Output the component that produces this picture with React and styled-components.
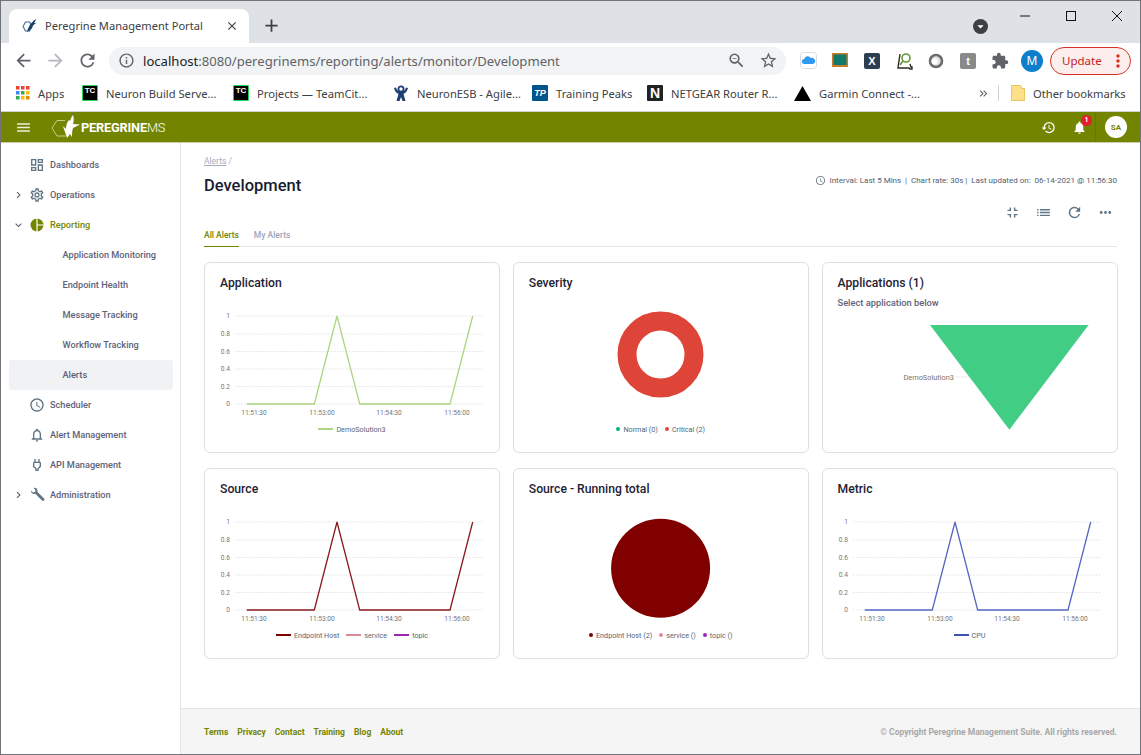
import React from "react";
import styled, { createGlobalStyle } from "styled-components";
import {
  MdArrowBack,
  MdArrowForward,
  MdRefresh,
  MdInfoOutline,
  MdZoomOut,
  MdStarBorder,
  MdExtension,
  MdMoreVert,
  MdClose,
  MdAdd,
  MdMenu,
  MdHistory,
  MdNotifications,
  MdNotificationsNone,
  MdChevronRight,
  MdExpandMore,
  MdOutlineDashboard,
  MdOutlineSettings,
  MdAccessTime,
  MdOutlinePower,
  MdFullscreenExit,
  MdList,
  MdMoreHoriz,
  MdArrowDropDown,
  MdKeyboardDoubleArrowRight,
} from "react-icons/md";

const OLIVE = "#738500";
const APP_FONT = `Roboto, "Liberation Sans", sans-serif`;
const CHROME_FONT = `"Noto Sans", "Open Sans", sans-serif`;

const GlobalStyle = createGlobalStyle`
  html, body {
    margin: 0;
    padding: 0;
    background: #fff;
  }
  * {
    box-sizing: border-box;
  }
`;

const Shell = styled.div`
  width: 1141px;
  height: 755px;
  display: flex;
  flex-direction: column;
  overflow: hidden;
  border: 1px solid #707478;
  font-family: ${APP_FONT};
`;

// Browser chrome
const TabStrip = styled.div`
  height: 42px;
  flex: none;
  background: #dee1e6;
  display: flex;
  align-items: flex-end;
  padding-left: 8px;
  position: relative;
`;

const Tab = styled.div`
  width: 240px;
  height: 34px;
  background: #fff;
  border-radius: 8px 8px 0 0;
  display: flex;
  align-items: center;
  padding: 0 10px 1px 13px;
  font-family: ${CHROME_FONT};
  font-size: 11.1px;
  color: #3c4043;
`;

const TabTitle = styled.span`
  flex: 1;
  margin-left: 8px;
  white-space: nowrap;
`;

const NewTab = styled.div`
  display: flex;
  align-items: center;
  margin: 0 0 1px 12px;
  height: 34px;
  color: #3c4043;
  font-size: 21px;
`;

const TabSearch = styled.div`
  position: absolute;
  left: 972px;
  top: 18px;
  width: 15px;
  height: 15px;
  border-radius: 50%;
  background: #3c4043;
  color: #fff;
  display: flex;
  align-items: center;
  justify-content: center;
  font-size: 15px;
`;

const WindowControls = styled.div`
  position: absolute;
  right: 0;
  top: 0;
  display: flex;
  height: 30px;
  align-items: center;
  padding-right: 15px;
  gap: 30px;
`;

const Toolbar = styled.div`
  height: 35px;
  flex: none;
  background: #fff;
  display: flex;
  align-items: center;
  padding-left: 6px;
`;

const NavIcon = styled.div`
  width: 32px;
  height: 28px;
  display: flex;
  align-items: center;
  justify-content: center;
  font-size: 21px;
  color: ${(p) => (p.$off ? "#b4b7bb" : "#5f6368")};
`;

const Omnibox = styled.div`
  width: 677px;
  height: 28px;
  margin-left: 6px;
  border-radius: 14px;
  background: #f1f3f4;
  display: flex;
  align-items: center;
  padding: 0 2px 0 9px;
  color: #5f6368;
  font-size: 17px;
`;

const Url = styled.div`
  flex: 1;
  margin-left: 8px;
  font-family: ${CHROME_FONT};
  font-size: 13.1px;
  color: #5f6368;
  white-space: nowrap;
`;

const UrlHost = styled.span`
  color: #202124;
`;

const OmniAction = styled.div`
  width: 32px;
  display: flex;
  justify-content: center;
  font-size: 19px;
`;

const Extensions = styled.div`
  display: flex;
  align-items: center;
  margin-left: 6px;
`;

const Ext = styled.div`
  width: 32px;
  height: 28px;
  display: flex;
  align-items: center;
  justify-content: center;
`;

const ExtBadge = styled.div`
  width: 16px;
  height: 16px;
  border-radius: 2px;
  background: ${(p) => p.$bg};
  color: #fff;
  display: flex;
  align-items: center;
  justify-content: center;
  font-family: "Liberation Sans", sans-serif;
  font-size: 11px;
  font-weight: 700;
`;

const Profile = styled.div`
  width: 22px;
  height: 22px;
  border-radius: 50%;
  background: #0b7fcc;
  color: #fff;
  display: flex;
  align-items: center;
  justify-content: center;
  font-family: ${CHROME_FONT};
  font-size: 12px;
  margin-left: 5px;
`;

const UpdatePill = styled.div`
  width: 81px;
  height: 28px;
  margin-left: 7px;
  border: 1px solid #d93025;
  border-radius: 14px;
  background: #fbeeec;
  color: #c5221f;
  display: flex;
  align-items: center;
  padding-left: 11px;
  font-family: ${CHROME_FONT};
  font-size: 11.5px;
`;

const UpdateDots = styled.span`
  margin-left: 6px;
  display: flex;
  font-size: 20px;
  color: #d93025;
`;

const BookmarkBar = styled.div`
  height: 34px;
  flex: none;
  background: #fff;
  display: flex;
  align-items: center;
  padding: 0 0 3px 15px;
  font-family: ${CHROME_FONT};
  font-size: 11.2px;
  color: #3c4043;
  border-bottom: 1px solid #d2d3d5;
`;

const Bookmark = styled.div`
  width: ${(p) => p.$w}px;
  display: flex;
  align-items: center;
  gap: 8px;
  white-space: nowrap;
  flex: none;

  & > svg {
    flex: none;
  }
`;

const TileIcon = styled.div`
  width: 16px;
  height: 16px;
  flex: none;
  background: ${(p) => p.$bg};
  color: #fff;
  border: ${(p) => (p.$ring ? `1px solid ${p.$ring}` : "none")};
  font-family: "Liberation Sans", sans-serif;
  font-size: ${(p) => p.$fs || 8}px;
  font-weight: 700;
  font-style: ${(p) => (p.$italic ? "italic" : "normal")};
  line-height: ${(p) => p.$lh || 10}px;
  display: flex;
  justify-content: center;
  border-radius: 1px;
`;

const BarDivider = styled.div`
  width: 1px;
  height: 16px;
  background: #d0d2d5;
  margin: 0 12px 0 8px;
`;

// App header
const AppHeader = styled.header`
  height: 31px;
  flex: none;
  background: ${OLIVE};
  border-bottom: 1px solid #c9cdb0;
  display: flex;
  align-items: center;
  padding-left: 14px;
  color: #fff;
`;

const Burger = styled.div`
  display: flex;
  font-size: 17px;
  color: #eef1dc;
  margin-right: 18px;
`;

const LogoText = styled.div`
  font-family: ${APP_FONT};
  font-size: 12.8px;
  font-weight: 700;
  letter-spacing: -0.2px;
`;

const LogoLight = styled.span`
  font-weight: 300;
`;

const HeaderRight = styled.div`
  margin-left: auto;
  display: flex;
  align-items: center;
  height: 100%;
`;

const HeaderIcon = styled.div`
  position: relative;
  display: flex;
  font-size: 15px;
  margin-right: ${(p) => p.$mr}px;
`;

const Counter = styled.span`
  position: absolute;
  top: -5px;
  right: -5px;
  width: 11px;
  height: 11px;
  border-radius: 50%;
  background: #e3202a;
  color: #fff;
  font-size: 7px;
  font-weight: 700;
  line-height: 11px;
  text-align: center;
`;

const HeaderUser = styled.div`
  height: 100%;
  border-left: 1px solid #66760a;
  padding: 0 13px 0 9px;
  display: flex;
  align-items: center;
`;

const UserCircle = styled.div`
  width: 22px;
  height: 22px;
  border-radius: 50%;
  background: #fff;
  color: ${OLIVE};
  font-size: 8px;
  font-weight: 700;
  display: flex;
  align-items: center;
  justify-content: center;
`;

// Body
const Body = styled.div`
  flex: 1;
  min-height: 0;
  display: flex;
`;

const Sidebar = styled.nav`
  width: 180px;
  flex: none;
  border-right: 1px solid #e4e5e7;
  padding-top: 6.5px;
`;

const NavItem = styled.div`
  height: 30px;
  width: 164px;
  margin-left: 8px;
  padding-left: ${(p) => (p.$sub ? 53.5 : 5)}px;
  display: flex;
  align-items: center;
  border-radius: 3px;
  background: ${(p) => (p.$active ? "#f1f2f4" : "transparent")};
  color: ${(p) => (p.$on ? OLIVE : "#5e6278")};
  font-size: 9.2px;
  font-weight: 500;
  white-space: nowrap;
`;

const Chevron = styled.span`
  width: 13px;
  display: flex;
  font-size: 16px;
  color: #595d6e;
  margin-left: -2px;
  margin-right: 1px;
`;

const NavIconBox = styled.span`
  width: 18px;
  margin: 0 4px 0 2px;
  display: flex;
  justify-content: center;
  font-size: 16px;
  color: #5f7484;
`;

const Main = styled.main`
  flex: 1;
  min-width: 0;
  display: flex;
  flex-direction: column;
`;

const Content = styled.div`
  flex: 1;
  padding: 13px 23px 0 23px;
`;

const Crumb = styled.div`
  font-size: 8.5px;
  line-height: 11px;
  color: #a7abc3;
`;

const CrumbLink = styled.span`
  text-decoration: underline;
`;

const TitleRow = styled.div`
  display: flex;
  align-items: center;
  justify-content: space-between;
  margin-top: 6px;
  height: 24px;
`;

const PageTitle = styled.h1`
  margin: 0;
  font-size: 16.5px;
  font-weight: 500;
  color: #181c32;
`;

const Status = styled.div`
  display: flex;
  align-items: center;
  font-size: 8px;
  font-weight: 400;
  color: #4f6070;
  white-space: pre;
  margin-top: -9px;
`;

const StatusClock = styled.span`
  display: flex;
  font-size: 11px;
  margin-right: 4px;
  color: #74808c;
`;

const Actions = styled.div`
  display: flex;
  justify-content: flex-end;
  gap: 11px;
  height: 17px;
  margin-top: 6.5px;
  padding-right: 2px;
`;

const ActionIcon = styled.span`
  width: 20px;
  display: flex;
  justify-content: center;
  font-size: 17px;
  color: #5f7484;
`;

const Tabs = styled.div`
  display: flex;
  gap: 15px;
  margin-top: 2.5px;
  border-bottom: 1px solid #e4e5e7;
`;

const TabLink = styled.div`
  height: 24px;
  padding-top: 7px;
  font-size: 8.5px;
  font-weight: 500;
  color: ${(p) => (p.$on ? OLIVE : "#a1a5b7")};
  border-bottom: 1px solid ${(p) => (p.$on ? OLIVE : "transparent")};
  margin-bottom: -1px;
`;

const CardGrid = styled.div`
  display: grid;
  grid-template-columns: repeat(3, 1fr);
  grid-auto-rows: 190.5px;
  column-gap: 12.75px;
  row-gap: 15.5px;
  margin-top: 15px;
`;

const Card = styled.section`
  border: 1px solid #dedfe1;
  border-radius: 6px;
  padding-top: 13px;
  background: #fff;
`;

const CardTitle = styled.h3`
  margin: 0;
  padding-left: 15px;
  font-size: 12.2px;
  line-height: 15px;
  font-weight: 500;
  color: #1e2233;
`;

const CardSubtitle = styled.div`
  padding-left: 15px;
  margin-top: 5px;
  font-size: 9.3px;
  line-height: 14px;
  font-weight: 500;
  color: #5e6278;
`;

const ChartSvg = styled.svg`
  display: block;
`;

const AxisText = styled.text`
  font-family: ${APP_FONT};
  font-size: ${(p) => p.$size || 6.6}px;
  fill: #767676;
`;

const Legend = styled.div`
  height: 14px;
  margin-top: 1px;
  display: flex;
  align-items: center;
  justify-content: center;
  gap: 7px;
  font-size: 7.2px;
  color: #556677;
`;

const LegendItem = styled.span`
  display: flex;
  align-items: center;
  gap: 3px;
`;

const LegendLine = styled.i`
  width: 15px;
  height: 2px;
  background: ${(p) => p.$color};
`;

const LegendDot = styled.i`
  width: 4px;
  height: 4px;
  border-radius: 50%;
  background: ${(p) => p.$color};
`;

const Footer = styled.footer`
  height: 46px;
  flex: none;
  background: #f5f5f5;
  border-top: 1px solid #e4e5e7;
  display: flex;
  align-items: center;
  justify-content: space-between;
  padding: 0 23px;
  font-size: 8.5px;
  font-weight: 700;
`;

const FooterLinks = styled.div`
  display: flex;
  gap: 9px;
  color: ${OLIVE};
`;

const Copyright = styled.div`
  color: #a8a8a8;
`;

// Drawings
const Favicon = () => (
  <svg width="15" height="15" viewBox="0 0 15 15">
    <path d="M1 8.500l2.500-4.500h4l2.500 4.500-2.500 4.500h-4z" fill="none" stroke="#3d6e9c" strokeWidth="1.100" />
    <path d="M5 14c1-4 3-9 9-13-.5 2-1 3-2 4l2 0-3 2.500c-.5 2.500-3 5-6 6.500z" fill="#1c3f66" />
  </svg>
);

const PeregrineLogo = () => (
  <svg width="31" height="26" viewBox="0 0 31 26">
    <path d="M15 6.500H7L2 14l5 8h9" fill="none" stroke="#c3cd8d" strokeWidth="1" />
    <path
      d="M17 24c-1-4-3-8-4-12l3 3c0-4 1-7 3-9l1 1c1-3 2-5 3-6 1 3 1 6 0 9l7 .5-7 3.500c-1 3-1 6-1 9l-2-3z"
      fill="#fff"
    />
  </svg>
);

const ReportingIcon = () => (
  <svg width="14" height="14" viewBox="0 0 14 14">
    <circle cx="7" cy="7" r="6.500" fill={OLIVE} />
    <path d="M7 0v14M7 7h7" stroke="#fff" strokeWidth="1.200" />
  </svg>
);

const KeyIcon = () => (
  <svg width="15" height="15" viewBox="0 0 15 15">
    <path
      d="M1 3.500 3 5.500l2-.5.500-2L3.500 1c2-.8 4 .5 4 2.500 0 .5 0 1-.2 1.300l6.700 6.700c.6.600.6 1.400 0 2s-1.400.6-2 0L5.300 6.800c-2 .8-4.800-1-4.300-3.300z"
      fill="#5f7484"
    />
  </svg>
);

const AppsGrid = () => {
  const colors = ["#ea4335", "#ea4335", "#ea4335", "#4285f4", "#34a853", "#fbbc04", "#34a853", "#fbbc04", "#ea8600"];
  return (
    <svg width="14" height="14" viewBox="0 0 14 14">
      {colors.map((c, i) => (
        <rect key={i} x={(i % 3) * 5} y={Math.floor(i / 3) * 5} width="3.500" height="3.500" fill={c} />
      ))}
    </svg>
  );
};

const AtlassianIcon = () => (
  <svg width="16" height="17" viewBox="0 0 16 17">
    <circle cx="8" cy="4" r="2.600" fill="none" stroke="#1d3f72" strokeWidth="1.800" />
    <path d="M1 3c1 4 3 5 4.500 6L3.500 16h3L8 12l1.500 4h3l-2-7C12 8 14 7 15 3l-2-.5C12 6 10 7 8 7S4 6 3 2.500z" fill="#1d3f72" />
  </svg>
);

const GarminIcon = () => (
  <svg width="17" height="15" viewBox="0 0 17 15">
    <path d="M8.500 0 17 15H0z" fill="#000" />
  </svg>
);

const FolderIcon = () => (
  <svg width="14" height="16" viewBox="0 0 14 16">
    <path d="M.5.500h9l1 1v2h3v12H.500z" fill="#fce08a" stroke="#e8c660" />
  </svg>
);

const CloudExt = () => (
  <svg width="17" height="17" viewBox="0 0 17 17">
    <rect x=".5" y=".5" width="16" height="16" rx="3" fill="#fff" stroke="#dadce0" />
    <path d="M4.500 12a2.500 2.500 0 0 1-.3-5 3.500 3.500 0 0 1 6.500-1 3 3 0 0 1 2.300 6z" fill="#2f9bf0" />
  </svg>
);

const BoardExt = () => (
  <svg width="16" height="15" viewBox="0 0 16 15">
    <rect width="16" height="14" fill="#c77c2c" />
    <rect x="1.500" y="1.500" width="13" height="10.500" fill="#11786a" />
  </svg>
);

const SearchExt = () => (
  <svg width="17" height="18" viewBox="0 0 17 18">
    <path d="M4 2 2 16h11l1 1h2v-2h-1l-1-3" fill="none" stroke="#2b2b2b" strokeWidth="1.400" />
    <circle cx="10" cy="6" r="4" fill="#fff" stroke="#5f9a32" strokeWidth="1.600" />
    <path d="M7 9l-3 4" stroke="#5f9a32" strokeWidth="1.600" />
  </svg>
);

const RingExt = () => (
  <svg width="16" height="16" viewBox="0 0 16 16">
    <circle cx="8" cy="8" r="6" fill="#e4e4e4" stroke="#6b6b6b" strokeWidth="2.600" />
    <circle cx="6.500" cy="8.500" r="3" fill="#fff" />
  </svg>
);

const MinIcon = () => (
  <svg width="16" height="16" viewBox="0 0 16 16">
    <path d="M3 8h10" stroke="#111" strokeWidth="1" />
  </svg>
);

const MaxIcon = () => (
  <svg width="16" height="16" viewBox="0 0 16 16">
    <rect x="3.500" y="3.500" width="9" height="9" fill="none" stroke="#111" strokeWidth="1" />
  </svg>
);

const CloseIcon = () => (
  <svg width="16" height="16" viewBox="0 0 16 16">
    <path d="M3 3l10 10M13 3 3 13" stroke="#111" strokeWidth="1" />
  </svg>
);

const TICKS = [
  ["1", 25],
  ["0.8", 43],
  ["0.6", 60.5],
  ["0.4", 78],
  ["0.2", 95.5],
  ["0", 113],
];
const TIMES = [
  ["11:51:30", 49],
  ["11:53:00", 117],
  ["11:54:30", 184],
  ["11:56:00", 252],
];

const LineChart = ({ color }) => (
  <ChartSvg width="294" height="130" viewBox="0 0 294 130">
    {TICKS.map(([label, y]) => (
      <g key={label}>
        <line x1="30" x2="279" y1={y} y2={y} stroke="#dcdcdc" strokeWidth="0.8" strokeDasharray="1.500 1.500" />
        <AxisText x="25" y={y + 2.4} textAnchor="end">
          {label}
        </AxisText>
      </g>
    ))}
    {TIMES.map(([label, x]) => (
      <AxisText key={label} x={x} y="123.500" textAnchor="middle">
        {label}
      </AxisText>
    ))}
    <polyline
      points="41.700,113 109.300,113 132,25 154.700,113 245,113 267.700,25"
      fill="none"
      stroke={color}
      strokeWidth="1.300"
    />
  </ChartSvg>
);

const Donut = () => (
  <ChartSvg width="294" height="130" viewBox="0 0 294 130">
    <circle cx="146.500" cy="63.500" r="33.500" fill="none" stroke="#de4538" strokeWidth="19" />
  </ChartSvg>
);

const Pie = () => (
  <ChartSvg width="294" height="130" viewBox="0 0 294 130">
    <circle cx="146.600" cy="71.300" r="49.500" fill="#800000" />
  </ChartSvg>
);

const Funnel = () => (
  <ChartSvg width="294" height="125" viewBox="0 0 294 125">
    <path d="M107 15H265.600L186.400 119.700z" fill="#42cd85" />
    <line x1="133" x2="146" y1="67" y2="67" stroke="#cfcfcf" strokeWidth="0.8" strokeDasharray="1.500 1.500" />
    <AxisText $size={7.4} x="131" y="69.500" textAnchor="end">
      DemoSolution3
    </AxisText>
  </ChartSvg>
);

const NAV_SUB = ["Application Monitoring", "Endpoint Health", "Message Tracking", "Workflow Tracking"];

const App = () => {
  return (
    <>
      <GlobalStyle />
      <Shell>
        <TabStrip>
          <Tab>
            <Favicon />
            <TabTitle>Peregrine Management Portal</TabTitle>
            <MdClose size={14} color="#3c4043" />
          </Tab>
          <NewTab>
            <MdAdd />
          </NewTab>
          <TabSearch>
            <MdArrowDropDown />
          </TabSearch>
          <WindowControls>
            <MinIcon />
            <MaxIcon />
            <CloseIcon />
          </WindowControls>
        </TabStrip>

        <Toolbar>
          <NavIcon>
            <MdArrowBack />
          </NavIcon>
          <NavIcon $off>
            <MdArrowForward />
          </NavIcon>
          <NavIcon>
            <MdRefresh />
          </NavIcon>
          <Omnibox>
            <MdInfoOutline />
            <Url>
              <UrlHost>localhost</UrlHost>:8080/peregrinems/reporting/alerts/monitor/Development
            </Url>
            <OmniAction>
              <MdZoomOut />
            </OmniAction>
            <OmniAction>
              <MdStarBorder />
            </OmniAction>
          </Omnibox>
          <Extensions>
            <Ext>
              <CloudExt />
            </Ext>
            <Ext>
              <BoardExt />
            </Ext>
            <Ext>
              <ExtBadge $bg="#2c3e50">X</ExtBadge>
            </Ext>
            <Ext>
              <SearchExt />
            </Ext>
            <Ext>
              <RingExt />
            </Ext>
            <Ext>
              <ExtBadge $bg="#8a8a8a">t</ExtBadge>
            </Ext>
            <Ext>
              <MdExtension size={18} color="#5f6368" />
            </Ext>
          </Extensions>
          <Profile>M</Profile>
          <UpdatePill>
            Update
            <UpdateDots>
              <MdMoreVert />
            </UpdateDots>
          </UpdatePill>
        </Toolbar>

        <BookmarkBar>
          <Bookmark $w={66}>
            <AppsGrid />
            <span>Apps</span>
          </Bookmark>
          <Bookmark $w={151}>
            <TileIcon $bg="#000" $ring="#21d752">
              TC
            </TileIcon>
            <span>Neuron Build Serve...</span>
          </Bookmark>
          <Bookmark $w={160}>
            <TileIcon $bg="#000" $ring="#21d752">
              TC
            </TileIcon>
            <span>Projects — TeamCit...</span>
          </Bookmark>
          <Bookmark $w={139}>
            <AtlassianIcon />
            <span>NeuronESB - Agile...</span>
          </Bookmark>
          <Bookmark $w={115}>
            <TileIcon $bg="#00558c" $italic $fs={9} $lh={16}>
              TP
            </TileIcon>
            <span>Training Peaks</span>
          </Bookmark>
          <Bookmark $w={147}>
            <TileIcon $bg="#222" $fs={14} $lh={16}>
              N
            </TileIcon>
            <span>NETGEAR Router R...</span>
          </Bookmark>
          <Bookmark $w={183}>
            <GarminIcon />
            <span>Garmin Connect -...</span>
          </Bookmark>
          <MdKeyboardDoubleArrowRight size={13} color="#5f6368" />
          <BarDivider />
          <Bookmark $w={120}>
            <FolderIcon />
            <span>Other bookmarks</span>
          </Bookmark>
        </BookmarkBar>

        <AppHeader>
          <Burger>
            <MdMenu />
          </Burger>
          <PeregrineLogo />
          <LogoText>
            PEREGRINE<LogoLight>MS</LogoLight>
          </LogoText>
          <HeaderRight>
            <HeaderIcon $mr={16}>
              <MdHistory />
            </HeaderIcon>
            <HeaderIcon $mr={8}>
              <MdNotifications />
              <Counter>1</Counter>
            </HeaderIcon>
            <HeaderUser>
              <UserCircle>SA</UserCircle>
            </HeaderUser>
          </HeaderRight>
        </AppHeader>

        <Body>
          <Sidebar>
            <NavItem>
              <Chevron />
              <NavIconBox>
                <MdOutlineDashboard />
              </NavIconBox>
              Dashboards
            </NavItem>
            <NavItem>
              <Chevron>
                <MdChevronRight />
              </Chevron>
              <NavIconBox>
                <MdOutlineSettings />
              </NavIconBox>
              Operations
            </NavItem>
            <NavItem $on>
              <Chevron>
                <MdExpandMore />
              </Chevron>
              <NavIconBox>
                <ReportingIcon />
              </NavIconBox>
              Reporting
            </NavItem>
            {NAV_SUB.map((label) => (
              <NavItem key={label} $sub>
                {label}
              </NavItem>
            ))}
            <NavItem $sub $active>
              Alerts
            </NavItem>
            <NavItem>
              <Chevron />
              <NavIconBox>
                <MdAccessTime />
              </NavIconBox>
              Scheduler
            </NavItem>
            <NavItem>
              <Chevron />
              <NavIconBox>
                <MdNotificationsNone />
              </NavIconBox>
              Alert Management
            </NavItem>
            <NavItem>
              <Chevron />
              <NavIconBox>
                <MdOutlinePower />
              </NavIconBox>
              API Management
            </NavItem>
            <NavItem>
              <Chevron>
                <MdChevronRight />
              </Chevron>
              <NavIconBox>
                <KeyIcon />
              </NavIconBox>
              Administration
            </NavItem>
          </Sidebar>

          <Main>
            <Content>
              <Crumb>
                <CrumbLink>Alerts</CrumbLink> /
              </Crumb>
              <TitleRow>
                <PageTitle>Development</PageTitle>
                <Status>
                  <StatusClock>
                    <MdAccessTime />
                  </StatusClock>
                  {"Interval: Last 5 Mins  |  Chart rate: 30s |  Last updated on:  06-14-2021 @ 11:56:30"}
                </Status>
              </TitleRow>
              <Actions>
                <ActionIcon>
                  <MdFullscreenExit />
                </ActionIcon>
                <ActionIcon>
                  <MdList />
                </ActionIcon>
                <ActionIcon>
                  <MdRefresh />
                </ActionIcon>
                <ActionIcon>
                  <MdMoreHoriz />
                </ActionIcon>
              </Actions>
              <Tabs>
                <TabLink $on>All Alerts</TabLink>
                <TabLink>My Alerts</TabLink>
              </Tabs>

              <CardGrid>
                <Card>
                  <CardTitle>Application</CardTitle>
                  <LineChart color="#aed581" />
                  <Legend>
                    <LegendItem>
                      <LegendLine $color="#aed581" />
                      DemoSolution3
                    </LegendItem>
                  </Legend>
                </Card>
                <Card>
                  <CardTitle>Severity</CardTitle>
                  <Donut />
                  <Legend>
                    <LegendItem>
                      <LegendDot $color="#00b96f" />
                      Normal (0)
                    </LegendItem>
                    <LegendItem>
                      <LegendDot $color="#de4538" />
                      Critical (2)
                    </LegendItem>
                  </Legend>
                </Card>
                <Card>
                  <CardTitle>Applications (1)</CardTitle>
                  <CardSubtitle>Select application below</CardSubtitle>
                  <Funnel />
                </Card>
                <Card>
                  <CardTitle>Source</CardTitle>
                  <LineChart color="#8b1a1f" />
                  <Legend>
                    <LegendItem>
                      <LegendLine $color="#800000" />
                      Endpoint Host
                    </LegendItem>
                    <LegendItem>
                      <LegendLine $color="#d98a93" />
                      service
                    </LegendItem>
                    <LegendItem>
                      <LegendLine $color="#9c27b0" />
                      topic
                    </LegendItem>
                  </Legend>
                </Card>
                <Card>
                  <CardTitle>Source - Running total</CardTitle>
                  <Pie />
                  <Legend>
                    <LegendItem>
                      <LegendDot $color="#800000" />
                      Endpoint Host (2)
                    </LegendItem>
                    <LegendItem>
                      <LegendDot $color="#e48a95" />
                      service ()
                    </LegendItem>
                    <LegendItem>
                      <LegendDot $color="#9c27b0" />
                      topic ()
                    </LegendItem>
                  </Legend>
                </Card>
                <Card>
                  <CardTitle>Metric</CardTitle>
                  <LineChart color="#5566c4" />
                  <Legend>
                    <LegendItem>
                      <LegendLine $color="#3f51b5" />
                      CPU
                    </LegendItem>
                  </Legend>
                </Card>
              </CardGrid>
            </Content>
            <Footer>
              <FooterLinks>
                <span>Terms</span>
                <span>Privacy</span>
                <span>Contact</span>
                <span>Training</span>
                <span>Blog</span>
                <span>About</span>
              </FooterLinks>
              <Copyright>© Copyright Peregrine Management Suite. All rights reserved.</Copyright>
            </Footer>
          </Main>
        </Body>
      </Shell>
    </>
  );
};

export default App;
